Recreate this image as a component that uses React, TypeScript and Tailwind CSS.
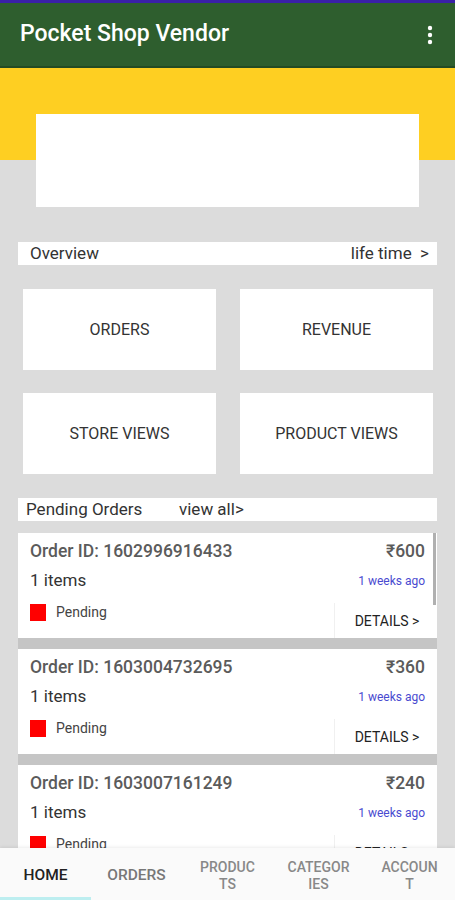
import React from "react";

const orders = [
  { id: "1602996916433", amount: "₹600" },
  { id: "1603004732695", amount: "₹360" },
  { id: "1603007161249", amount: "₹240" },
];

function Kebab() {
  return (
    <svg width="6" height="20" viewBox="0 0 6 20" className="fill-white">
      <circle cx="3" cy="3" r="2.2" />
      <circle cx="3" cy="10" r="2.2" />
      <circle cx="3" cy="17" r="2.2" />
    </svg>
  );
}

function OrderCard({ id, amount }: { id: string; amount: string }) {
  return (
    <div className="flex h-[105px] shrink-0 flex-col bg-white">
      <div className="mt-[8px] flex h-[20px] items-center justify-between px-[12px] text-[17.5px] font-medium text-[#5b5b5b]">
        <span>Order ID: {id}</span>
        <span>{amount}</span>
      </div>
      <div className="mt-[10px] flex h-[20px] items-center justify-between px-[12px]">
        <span className="text-[17px] text-[#333]">1 items</span>
        <span className="text-[12px] text-[#4a4ad0]">1 weeks ago</span>
      </div>
      <div className="mt-[12px] flex flex-1">
        <div className="flex flex-1 items-start gap-[10px] pl-[12px] pt-[1px]">
          <div className="h-[17px] w-[16px] bg-[#ff0000]" />
          <span className="text-[14px] leading-[17px] text-[#444]">Pending</span>
        </div>
        <div className="flex w-[103px] items-center justify-center border-l border-[#f0f0f0] pl-[2px] pt-[2px] text-[14px] text-[#222]">
          DETAILS &gt;
        </div>
      </div>
    </div>
  );
}

function NavTab({ active, lines }: { active?: boolean; lines: string[] }) {
  const single = lines.length === 1;
  return (
    <div className="flex flex-col items-center justify-center">
      <span
        className={
          single
            ? active
              ? "text-[15.5px] font-medium text-[#222]"
              : "text-[15.5px] font-medium text-[#777]"
            : "text-center text-[14px] font-medium leading-[17px] text-[#888]"
        }
      >
        {lines.map((l, i) => (
          <React.Fragment key={i}>
            {i > 0 && <br />}
            {l}
          </React.Fragment>
        ))}
      </span>
    </div>
  );
}

export default function App() {
  return (
    <div className="flex h-[900px] w-[455px] flex-col overflow-hidden bg-[#dcdcdc] font-['Roboto',sans-serif]">
      <div className="h-[3px] bg-[#3a20a8]" />
      <header className="flex h-[65px] items-center justify-between border-b-2 border-[#244b24] bg-[#2e5e2e] pl-[20px] pr-[22px]">
        <h1 className="text-[23px] font-medium text-white">Pocket Shop Vendor</h1>
        <Kebab />
      </header>

      <main className="flex-1 overflow-hidden">
        <section className="bg-[linear-gradient(to_bottom,#fecf22_92px,#dcdcdc_92px)] pt-[46px]">
          <div className="mx-[36px] h-[93px] bg-white" />
        </section>

        <div className="mx-[18px] mt-[35px] flex h-[23px] items-center justify-between bg-white pl-[12px] pr-[8px] text-[17px] text-[#333]">
          <span>Overview</span>
          <span>life time &nbsp;&gt;</span>
        </div>

        <div className="ml-[23px] mr-[22px] mt-[24px] grid grid-cols-2 gap-x-[24px] gap-y-[23px]">
          {["ORDERS", "REVENUE", "STORE VIEWS", "PRODUCT VIEWS"].map((t) => (
            <div key={t} className="flex h-[81px] items-center justify-center bg-white text-[16px] text-[#333]">
              {t}
            </div>
          ))}
        </div>

        <div className="mx-[18px] mt-[24px] flex h-[23px] items-center bg-white pl-[8px] text-[17px] text-[#333]">
          <span className="w-[153px]">Pending Orders</span>
          <span>view all&gt;</span>
        </div>

        <div className="relative mx-[18px] mt-[12px] flex flex-col gap-[11px] bg-[#c5c5c5]">
          {orders.map((o) => (
            <OrderCard key={o.id} id={o.id} amount={o.amount} />
          ))}
          <div className="absolute right-[1px] top-0 h-[72px] w-[3px] bg-[#b0b0b0]" />
        </div>
      </main>

      <nav className="relative grid h-[52px] grid-cols-5 bg-[#fafafa] pt-[4px] shadow-[0_-1px_3px_rgba(0,0,0,0.08)]">
        <NavTab active lines={["HOME"]} />
        <NavTab lines={["ORDERS"]} />
        <NavTab lines={["PRODUC", "TS"]} />
        <NavTab lines={["CATEGOR", "IES"]} />
        <NavTab lines={["ACCOUN", "T"]} />
        <div className="absolute bottom-0 left-0 h-[3px] w-[91px] bg-[#bdeef0]" />
      </nav>
    </div>
  );
}
